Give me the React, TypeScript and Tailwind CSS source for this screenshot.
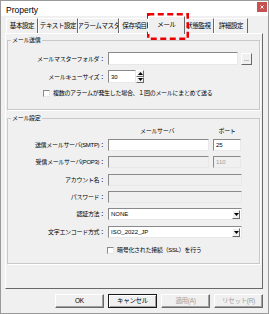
import React from "react";

function Tab({ label, w, selected }: { label: string; w: string; selected?: boolean }) {
  if (selected) {
    return (
      <div
        className={`${w} relative z-10 -mx-[2px] h-[18px] -mb-[1px] bg-[#f0f0f0] border-t border-l border-t-white border-l-white border-r border-r-[#696969] flex items-center justify-center pb-[1px]`}
      >
        {label}
      </div>
    );
  }
  return (
    <div
      className={`${w} h-[15px] border-t border-l border-t-white border-l-white border-r border-r-[#696969] flex items-center justify-center whitespace-nowrap overflow-hidden`}
    >
      {label}
    </div>
  );
}

function Sunken({ className, children, disabled }: { className: string; children?: React.ReactNode; disabled?: boolean }) {
  return (
    <div
      className={`${className} ${disabled ? "bg-[#f0f0f0] text-[#a0a0a0]" : "bg-white text-black"} border border-t-[#8a8a8a] border-l-[#8a8a8a] border-b-[#e8e8e8] border-r-[#e8e8e8] flex items-center pl-[2px] overflow-hidden whitespace-nowrap`}
    >
      {children}
    </div>
  );
}

function Label({ children }: { children: React.ReactNode }) {
  return <div className="w-[97px] shrink-0 text-right whitespace-nowrap">{children}</div>;
}

function DropArrow() {
  return (
    <div className="ml-auto w-[8px] h-[9px] mr-[1px] bg-[#f0f0f0] border border-t-white border-l-white border-b-[#696969] border-r-[#696969] flex items-center justify-center">
      <svg width="5" height="3" viewBox="0 0 5 3">
        <path d="M0 0 L5 0 L2.5 3 Z" fill="#000" />
      </svg>
    </div>
  );
}

function Check() {
  return <div className="w-[7px] h-[7px] bg-white border border-t-[#8a8a8a] border-l-[#8a8a8a] border-b-[#e8e8e8] border-r-[#e8e8e8] shrink-0" />;
}

function Button({ label, disabled, def }: { label: string; disabled?: boolean; def?: boolean }) {
  return (
    <div
      className={`w-[49px] h-[14px] bg-[#f0f0f0] flex items-center justify-center ${
        def
          ? "border border-[#1a1a1a] shadow-[inset_1px_1px_0_#ffffff,inset_-1px_-1px_0_#a0a0a0]"
          : "border border-t-white border-l-white border-b-[#696969] border-r-[#696969] shadow-[inset_-1px_-1px_0_#a0a0a0]"
      } ${disabled ? "text-[#a0a0a0]" : "text-black"}`}
    >
      {label}
    </div>
  );
}

export default function App() {
  return (
    <div className="relative w-[269px] h-[314px] bg-[#f0f0f0] border border-[#9a9a9a] font-['Liberation_Sans','Noto_Sans_CJK_JP',sans-serif] text-[6px] tracking-[-0.3px] leading-[8px] text-black overflow-hidden flex flex-col">
      {/* title bar */}
      <div className="h-[15px] bg-white flex items-center justify-between pl-[5px] pr-[1px] shrink-0">
        <span className="text-[8.5px] tracking-normal text-black leading-[10px] mt-[2px]">Property</span>
        <div className="w-[10px] h-[10px] bg-[#c75050] flex items-center justify-center -mt-[3px]">
          <svg width="4" height="4" viewBox="0 0 4 4">
            <path d="M0.5 0.5 L3.5 3.5 M3.5 0.5 L0.5 3.5" stroke="#fff" strokeWidth="0.9" />
          </svg>
        </div>
      </div>

      {/* tabs */}
      <div className="flex items-end h-[17px] pl-[5px] shrink-0 text-[6.5px] tracking-[-0.4px]">
        <Tab label="基本設定" w="w-[32px]" />
        <Tab label="テキスト設定" w="w-[40px]" />
        <Tab label="アラームマスタ" w="w-[41px]" />
        <Tab label="保存項目" w="w-[31px]" />
        <Tab label="メール" w="w-[37px]" selected />
        <Tab label="状態監視" w="w-[31px]" />
        <Tab label="詳細設定" w="w-[34px]" />
      </div>

      {/* panel */}
      <div className="ml-[4px] w-[258px] h-[256px] shrink-0 border border-t-white border-l-white border-b-[#696969] border-r-[#696969] pl-[1px] pt-[2px]">
        {/* group 1 */}
        <fieldset className="w-[253px] h-[74px] border border-[#c8c8c8] shadow-[1px_1px_0_#ffffff]">
          <legend className="ml-[3px] px-[1px] leading-[8px]">メール送信</legend>
          <div className="flex items-center mt-[8px] h-[13px]">
            <Label>メールマスターフォルダ：</Label>
            <Sunken className="ml-[3px] w-[130px] h-[13px]" />
            <div className="ml-[3px] w-[11px] h-[12px] bg-[#f0f0f0] border border-t-white border-l-white border-b-[#696969] border-r-[#696969] flex items-end justify-center pb-[2px] text-[6px] leading-[6px] tracking-normal">
              ...
            </div>
          </div>
          <div className="flex items-center mt-[5px] h-[13px]">
            <Label>メールキューサイズ：</Label>
            <Sunken className="ml-[3px] w-[28px] h-[13px] text-[6px] tracking-normal">30</Sunken>
            <div className="w-[8px] h-[13px] flex flex-col">
              <div className="h-[6.5px] bg-[#f0f0f0] border border-t-white border-l-white border-b-[#696969] border-r-[#696969] flex items-center justify-center">
                <svg width="5" height="3" viewBox="0 0 5 3">
                  <path d="M0 3 L5 3 L2.5 0 Z" fill="#000" />
                </svg>
              </div>
              <div className="h-[6.5px] bg-[#f0f0f0] border border-t-white border-l-white border-b-[#696969] border-r-[#696969] flex items-center justify-center">
                <svg width="5" height="3" viewBox="0 0 5 3">
                  <path d="M0 0 L5 0 L2.5 3 Z" fill="#000" />
                </svg>
              </div>
            </div>
          </div>
          <div className="flex items-center mt-[6px] ml-[35px] gap-[3px]">
            <Check />
            <span className="whitespace-nowrap">複数のアラームが発生した場合、１回のメールにまとめて送る</span>
          </div>
        </fieldset>

        {/* group 2 */}
        <fieldset className="mt-[4px] w-[253px] h-[150px] border border-[#c8c8c8] shadow-[1px_1px_0_#ffffff]">
          <legend className="ml-[3px] px-[1px] leading-[8px]">メール設定</legend>
          <div className="flex items-center mt-[5px] h-[8px]">
            <div className="w-[100px] shrink-0" />
            <div className="w-[105px] pl-[32px] whitespace-nowrap">メールサーバ</div>
            <div className="w-[28px] text-center whitespace-nowrap">ポート</div>
          </div>
          <div className="flex items-center mt-[4px] h-[12px]">
            <Label>送信メールサーバ(SMTP)：</Label>
            <Sunken className="ml-[3px] w-[101px] h-[12px]" />
            <Sunken className="ml-[4px] w-[28px] h-[12px] tracking-normal">25</Sunken>
          </div>
          <div className="flex items-center mt-[5px] h-[12px]">
            <Label>受信メールサーバ(POP3)：</Label>
            <Sunken className="ml-[3px] w-[101px] h-[12px]" disabled />
            <Sunken className="ml-[4px] w-[28px] h-[12px] tracking-normal" disabled>110</Sunken>
          </div>
          <div className="flex items-center mt-[6px] h-[12px]">
            <Label>アカウント名：</Label>
            <Sunken className="ml-[3px] w-[134px] h-[12px]" disabled />
          </div>
          <div className="flex items-center mt-[5px] h-[12px]">
            <Label>パスワード：</Label>
            <Sunken className="ml-[3px] w-[134px] h-[12px]" disabled />
          </div>
          <div className="flex items-center mt-[5px] h-[12px]">
            <Label>認証方法：</Label>
            <Sunken className="ml-[3px] w-[134px] h-[12px] tracking-normal">
              NONE
              <DropArrow />
            </Sunken>
          </div>
          <div className="flex items-center mt-[6px] h-[12px]">
            <Label>文字エンコード方式：</Label>
            <Sunken className="ml-[3px] w-[134px] h-[12px] tracking-normal">
              ISO_2022_JP
              <DropArrow />
            </Sunken>
          </div>
          <div className="flex items-center mt-[8px] ml-[99px] gap-[3px]">
            <Check />
            <span className="whitespace-nowrap">暗号化された接続（SSL）を行う</span>
          </div>
        </fieldset>
      </div>

      {/* buttons */}
      <div className="flex gap-[4px] pl-[54px] mt-[5px] text-[6.5px] tracking-[-0.3px]">
        <Button label="OK" />
        <Button label="キャンセル" def />
        <Button label="適用(A)" disabled />
        <Button label="リセット(R)" disabled />
      </div>

      {/* highlight */}
      <svg className="absolute left-[146px] top-[12px]" width="42" height="27" viewBox="0 0 42 27">
        <rect x="1.25" y="1.25" width="39.5" height="24.5" fill="none" stroke="#ee0000" strokeWidth="2.5" strokeDasharray="6 3.5" />
      </svg>
    </div>
  );
}
